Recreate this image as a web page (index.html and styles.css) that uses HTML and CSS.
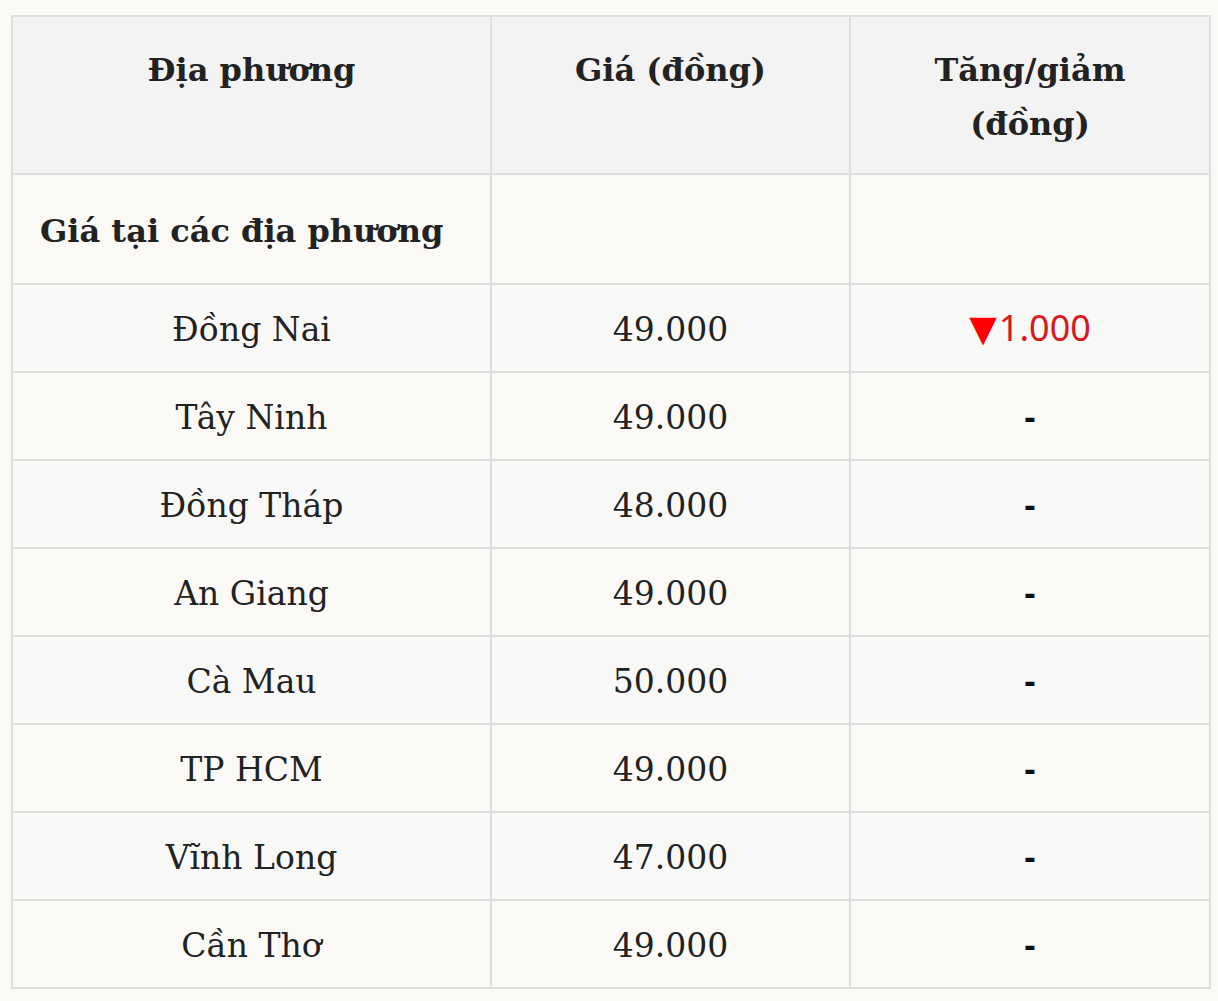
FILE: index.html
```html
<!DOCTYPE html>
<html lang="vi">
<head>
<meta charset="utf-8">
<title>Giá tại các địa phương</title>
<link rel="stylesheet" href="styles.css">
</head>
<body>
<table class="price-table">
  <colgroup>
    <col class="c1"><col class="c2"><col class="c3">
  </colgroup>
  <thead>
    <tr>
      <th>Địa phương</th>
      <th>Giá (đồng)</th>
      <th>Tăng/giảm<br>(đồng)</th>
    </tr>
  </thead>
  <tbody>
    <tr class="section">
      <td class="section-title">Giá tại các địa phương</td>
      <td></td>
      <td></td>
    </tr>
    <tr><td>Đồng Nai</td><td>49.000</td><td><span class="down"><span class="tri">▼</span>1.000</span></td></tr>
    <tr><td>Tây Ninh</td><td>49.000</td><td><span class="dash">-</span></td></tr>
    <tr><td>Đồng Tháp</td><td>48.000</td><td><span class="dash">-</span></td></tr>
    <tr><td>An Giang</td><td>49.000</td><td><span class="dash">-</span></td></tr>
    <tr><td>Cà Mau</td><td>50.000</td><td><span class="dash">-</span></td></tr>
    <tr><td>TP HCM</td><td>49.000</td><td><span class="dash">-</span></td></tr>
    <tr><td>Vĩnh Long</td><td>47.000</td><td><span class="dash">-</span></td></tr>
    <tr><td>Cần Thơ</td><td>49.000</td><td><span class="dash">-</span></td></tr>
  </tbody>
</table>
</body>
</html>
```
FILE: styles.css
```css
html, body {
  margin: 0;
  padding: 0;
  background: #faf9f5;
}
body {
  padding: 15px 0 0 11px;
  font-family: "DejaVu Serif", "Liberation Serif", serif;
  color: #222;
}
.price-table {
  border-collapse: collapse;
  width: 1198px;
  table-layout: fixed;
}
.c1 { width: 479px; }
.c2 { width: 359px; }
.c3 { width: 360px; }
.price-table th,
.price-table td {
  border: 2px solid #dedede;
  text-align: center;
  vertical-align: middle;
}
.price-table th {
  background: #f3f3f3;
  font-weight: bold;
  font-size: 32px;
  line-height: 54px;
  padding: 26px 10px 22px;
  vertical-align: top;
}
.price-table td {
  font-size: 33px;
  line-height: 54px;
  height: 54px;
  padding: 18px 10px 14px;
}
.price-table tbody tr:nth-child(odd) td { background: #faf9f5; }
.price-table tbody tr:nth-child(even) td { background: #f8f8f7; }
.price-table tr.section td {
  padding: 29px 10px 25px;
}
.price-table tr.section td.section-title {
  text-align: left;
  padding-left: 27px;
  font-weight: bold;
  font-size: 32px;
}
.down {
  color: #d71920;
  font-family: "Noto Sans", "Open Sans", sans-serif;
  font-size: 36px;
  line-height: 1;
}
.tri {
  color: #ff0000;
  font-family: "DejaVu Sans", sans-serif;
  font-size: 36px;
  line-height: 1;
  margin-right: 2px;
}
.dash {
  color: #111;
  font-family: "Noto Sans", sans-serif;
  font-weight: bold;
  font-size: 34px;
  line-height: 1;
}
```
